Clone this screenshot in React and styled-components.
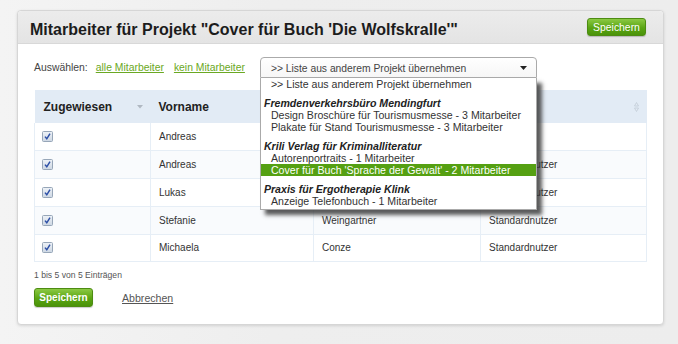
import React from 'react';
import styled, { createGlobalStyle } from 'styled-components';

const GlobalStyle = createGlobalStyle`
  html, body {
    margin: 0;
    padding: 0;
    background: #efefef;
    font-family: "Liberation Sans", Arial, sans-serif;
  }
`;

const Page = styled.div`
  width: 678px;
  height: 344px;
  box-sizing: border-box;
  padding: 10px 14px 0 17px;
  background: linear-gradient(90deg, #f4f4f4 0%, #eeeeee 40%, #ededed 100%);
`;

const Card = styled.div`
  width: 647px;
  box-sizing: border-box;
  background: #fff;
  border: 1px solid #d6d6d6;
  border-radius: 4px;
  box-shadow: 0 1px 3px rgba(0, 0, 0, 0.12);
`;

const CardHeader = styled.div`
  height: 33px;
  box-sizing: border-box;
  display: flex;
  align-items: center;
  justify-content: space-between;
  padding: 0 17px 0 12px;
  background: linear-gradient(#ececec, #e4e4e4);
  border-bottom: 1px solid #d8d8d8;
  border-radius: 4px 4px 0 0;
`;

const Title = styled.h1`
  margin: 0;
  padding-top: 6px;
  font-size: 16px;
  font-weight: bold;
  color: #1c1c1c;
`;

const GreenButton = styled.button`
  height: ${p => (p.$small ? '18px' : '19px')};
  width: 59px;
  padding: 0;
  border: 1px solid #4d8c12;
  border-radius: 3px;
  background: linear-gradient(#8bc943, #5aa513 55%, #4b930a);
  color: #fff;
  font-family: "Liberation Sans", Arial, sans-serif;
  font-size: ${p => (p.$small ? '10.4px' : '10px')};
  font-weight: ${p => (p.$small ? 'normal' : 'bold')};
  box-shadow: 0 1px 1px rgba(0, 0, 0, 0.2);
  cursor: pointer;
`;

const CardBody = styled.div`
  padding: 13px 17px 17px 16px;
`;

const Toolbar = styled.div`
  display: flex;
  align-items: center;
  height: 21px;
  font-size: 10.4px;
  color: #444;
`;

const Label = styled.span`
  margin-right: 8px;
`;

const GreenLink = styled.a`
  color: #6aa823;
  text-decoration: underline;
  margin-right: 10px;
  cursor: pointer;
`;

const SelectWrap = styled.div`
  position: relative;
  margin-left: 5px;
  width: 277px;
  height: 21px;
`;

const SelectBox = styled.div`
  height: 21px;
  box-sizing: border-box;
  display: flex;
  align-items: center;
  justify-content: space-between;
  padding: 1px 9px 0 10px;
  border: 1px solid #aaaaaa;
  border-radius: 4px 4px 0 0;
  background: linear-gradient(#ffffff, #f6f6f6);
  color: #444;
  font-size: 10.3px;
`;

const DropList = styled.div`
  position: absolute;
  left: 0;
  top: 21px;
  width: 277px;
  box-sizing: border-box;
  background: #fff;
  border: 1px solid #aaaaaa;
  border-top: none;
  padding: 0 0 2px;
  box-shadow: 5px 5px 4px rgba(50, 50, 50, 0.8);
  z-index: 10;
`;

const Option = styled.div`
  height: 12px;
  line-height: 12px;
  padding-left: 10px;
  font-size: 10.6px;
  white-space: nowrap;
  color: ${p => (p.$active ? '#fff' : '#333')};
  background: ${p => (p.$active ? '#55a012' : 'transparent')};
`;

const GroupLabel = styled.div`
  height: 12px;
  line-height: 12px;
  margin-top: 7px;
  padding-left: 3px;
  font-size: 10.6px;
  font-weight: bold;
  font-style: italic;
  color: #222;
`;

const Table = styled.table`
  margin-top: 12px;
  width: 612px;
  border-collapse: collapse;
  table-layout: fixed;
`;

const Th = styled.th`
  height: 33px;
  box-sizing: border-box;
  padding: 0 8px 0 ${p => (p.$first ? '9px' : '8px')};
  background: #e2ebf5;
  text-align: left;
  font-size: 12px;
  font-weight: bold;
  color: #222;
`;

const HeadInner = styled.div`
  display: flex;
  align-items: center;
  justify-content: space-between;
`;

const Tr = styled.tr`
  background: ${p => (p.$alt ? '#f9fbfd' : '#fff')};
`;

const Td = styled.td`
  height: 27.75px;
  box-sizing: border-box;
  padding: 0 8px 0 ${p => (p.$first ? '7px' : '8px')};
  border: 1px solid #e6eef6;
  border-top: none;
  font-size: 10px;
  color: #333;
`;

const Info = styled.div`
  margin-top: 8px;
  font-size: 8.6px;
  line-height: 10px;
  color: #555;
`;

const Actions = styled.div`
  display: flex;
  align-items: center;
  gap: 29px;
  margin-top: 8px;
`;

const CancelLink = styled.a`
  color: #555;
  font-size: 10.6px;
  text-decoration: underline;
  cursor: pointer;
`;

const Check = () => (
  <svg width="11" height="11" viewBox="0 0 11 11" style={{ display: 'block' }}>
    <defs>
      <linearGradient id="cb" x1="0" y1="0" x2="0" y2="1">
        <stop offset="0" stopColor="#eef2f7" />
        <stop offset="1" stopColor="#cdd7e3" />
      </linearGradient>
    </defs>
    <rect x="0.5" y="0.5" width="10" height="10" rx="1" fill="url(#cb)" stroke="#97a6b8" />
    <path d="M3 5.6 L4.8 7.8 L8 2.6" fill="none" stroke="#2d4fa6" strokeWidth="1.5" />
  </svg>
);

const SortDown = () => (
  <svg width="6" height="5" viewBox="0 0 6 5">
    <path d="M0 1 L6 1 L3 4.5 Z" fill="#b0b8c2" />
  </svg>
);

const SortBoth = () => (
  <svg width="5" height="10" viewBox="0 0 5 10">
    <path d="M2.5 0.5 L4.5 4 L0.5 4 Z M2.5 9.5 L4.5 6 L0.5 6 Z" fill="none" stroke="#c3ccd6" strokeWidth="0.8" />
  </svg>
);

const Caret = () => (
  <svg width="7" height="4" viewBox="0 0 7 4">
    <path d="M0 0 L7 0 L3.5 4 Z" fill="#222" />
  </svg>
);

const rows = [
  { first: 'Andreas', last: 'Hoffmann', role: 'Admin' },
  { first: 'Andreas', last: 'Keller', role: 'Standardnutzer' },
  { first: 'Lukas', last: 'Brenner', role: 'Standardnutzer' },
  { first: 'Stefanie', last: 'Weingartner', role: 'Standardnutzer' },
  { first: 'Michaela', last: 'Conze', role: 'Standardnutzer' },
];

const groups = [
  {
    name: 'Fremdenverkehrsbüro Mendingfurt',
    items: ['Design Broschüre für Tourismusmesse - 3 Mitarbeiter', 'Plakate für Stand Tourismusmesse - 3 Mitarbeiter'],
  },
  {
    name: 'Krili Verlag für Kriminalliteratur',
    items: ['Autorenportraits - 1 Mitarbeiter', "Cover für Buch 'Sprache der Gewalt' - 2 Mitarbeiter"],
  },
  {
    name: 'Praxis für Ergotherapie Klink',
    items: ['Anzeige Telefonbuch - 1 Mitarbeiter'],
  },
];

const active = "Cover für Buch 'Sprache der Gewalt' - 2 Mitarbeiter";

export default function App() {
  return (
    <>
      <GlobalStyle />
      <Page>
        <Card>
          <CardHeader>
            <Title>Mitarbeiter für Projekt "Cover für Buch 'Die Wolfskralle'"</Title>
            <GreenButton $small>Speichern</GreenButton>
          </CardHeader>
          <CardBody>
            <Toolbar>
              <Label>Auswählen:</Label>
              <GreenLink>alle Mitarbeiter</GreenLink>
              <GreenLink>kein Mitarbeiter</GreenLink>
              <SelectWrap>
                <SelectBox>
                  <span>&gt;&gt; Liste aus anderem Projekt übernehmen</span>
                  <Caret />
                </SelectBox>
                <DropList>
                  <Option>&gt;&gt; Liste aus anderem Projekt übernehmen</Option>
                  {groups.map(g => (
                    <React.Fragment key={g.name}>
                      <GroupLabel>{g.name}</GroupLabel>
                      {g.items.map(it => (
                        <Option key={it} $active={it === active}>{it}</Option>
                      ))}
                    </React.Fragment>
                  ))}
                </DropList>
              </SelectWrap>
            </Toolbar>

            <Table>
              <colgroup>
                <col style={{ width: '116px' }} />
                <col style={{ width: '163px' }} />
                <col style={{ width: '167px' }} />
                <col style={{ width: '166px' }} />
              </colgroup>
              <thead>
                <tr>
                  <Th $first><HeadInner>Zugewiesen <SortDown /></HeadInner></Th>
                  <Th><HeadInner>Vorname</HeadInner></Th>
                  <Th><HeadInner>Nachname</HeadInner></Th>
                  <Th><HeadInner>Rolle <SortBoth /></HeadInner></Th>
                </tr>
              </thead>
              <tbody>
                {rows.map((r, i) => (
                  <Tr key={i} $alt={i % 2 === 1}>
                    <Td $first><Check /></Td>
                    <Td>{r.first}</Td>
                    <Td>{r.last}</Td>
                    <Td>{r.role}</Td>
                  </Tr>
                ))}
              </tbody>
            </Table>

            <Info>1 bis 5 von 5 Einträgen</Info>
            <Actions>
              <GreenButton>Speichern</GreenButton>
              <CancelLink>Abbrechen</CancelLink>
            </Actions>
          </CardBody>
        </Card>
      </Page>
    </>
  );
}
